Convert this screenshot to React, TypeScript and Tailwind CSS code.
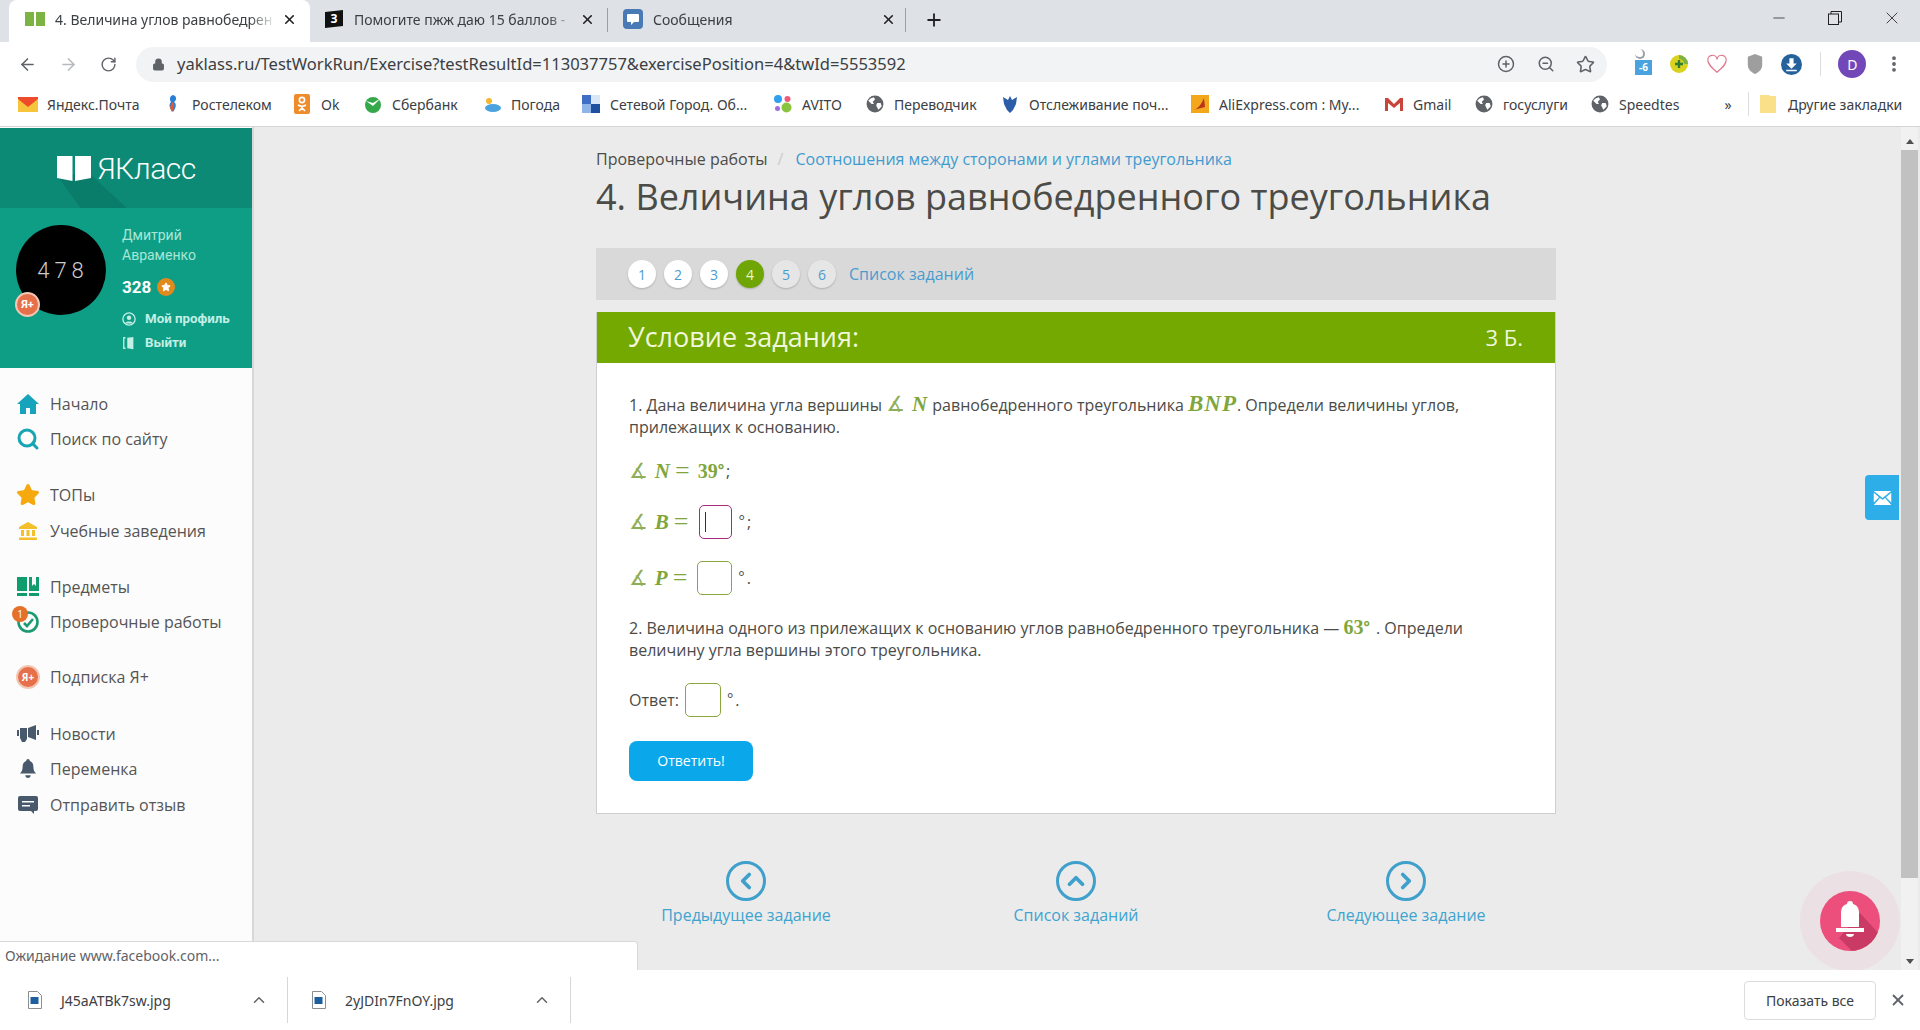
/**
 * YaKlass exercise page inside a Chrome window.
 */

import {
  ArrowLeft,
  ArrowRight,
  ChevronLeft,
  ChevronRight,
  ChevronUp,
  CirclePlus,
  EllipsisVertical,
  Lock,
  Minus,
  Plus,
  RotateCw,
  Search,
  Star,
  X,
  ZoomOut,
} from 'lucide-react';
import type { ReactNode } from 'react';

const chromeFont = "font-['Noto_Sans',sans-serif]";
const pageFont = "font-['Open_Sans',sans-serif]";
const mathClass = "font-['Liberation_Serif',serif] italic font-bold text-[#7fa63c] leading-[0] text-[21px] tracking-[1px]";
const digitClass = "font-['Liberation_Serif',serif] font-bold text-[#7fa63c] leading-[0] text-[20px]";
const equalsClass = "font-['Liberation_Serif',serif] text-[#7fa63c] leading-[0] text-[26px]";

function Globe() {
  return (
    <svg viewBox="0 0 16 16" className="w-[18px] h-[18px]">
      <circle cx="8" cy="8" r="7.5" fill="#5f6368" />
      <path d="M4 3l3-1 1 2-2 2 1 2-2 0-3-3zM10 7l3 0 1 3-3 3-1-2-1-2z" fill="#fff" />
    </svg>
  );
}

function Sq({ children }: { children: ReactNode }) {
  return (
    <svg viewBox="0 0 20 20" className="w-5 h-5">
      {children}
    </svg>
  );
}

const bookmarks: { label: string; width: string; icon: ReactNode }[] = [
  {
    label: 'Яндекс.Почта',
    width: 'w-[145px]',
    icon: (
      <Sq>
        <rect x="0" y="3" width="20" height="15" fill="#f7c53c" />
        <path d="M0 3h20v2l-10 8-10-8z" fill="#ee4b2b" />
      </Sq>
    ),
  },
  {
    label: 'Ростелеком',
    width: 'w-[129px]',
    icon: (
      <Sq>
        <path d="M10 1c4 1 4 5 1 7 3 2 2 6-1 10-3-3-5-7-2-10-2-3-1-6 2-7z" fill="#2a7fd5" />
        <path d="M10 8c2 2 1 6-1 10-2-3-3-6 1-10z" fill="#e8562a" />
      </Sq>
    ),
  },
  {
    label: 'Ok',
    width: 'w-[71px]',
    icon: (
      <Sq>
        <rect x="2" y="0" width="16" height="20" rx="2" fill="#ee8c2c" />
        <circle cx="10" cy="6" r="2.6" fill="none" stroke="#fff" strokeWidth="1.6" />
        <path d="M6 11c2.500 1.500 5.500 1.500 8 0M10 12v2M7 17l3-3 3 3" fill="none" stroke="#fff" strokeWidth="1.6" />
      </Sq>
    ),
  },
  {
    label: 'Сбербанк',
    width: 'w-[119px]',
    icon: (
      <Sq>
        <circle cx="10" cy="11" r="8" fill="#35a84a" />
        <path d="M3 7l7 5 8-8-8 5z" fill="#fff" />
      </Sq>
    ),
  },
  {
    label: 'Погода',
    width: 'w-[99px]',
    icon: (
      <Sq>
        <circle cx="7" cy="7" r="3" fill="#f5b82e" />
        <ellipse cx="11" cy="14" rx="8" ry="4" fill="#4aa3df" />
      </Sq>
    ),
  },
  {
    label: 'Сетевой Город. Об...',
    width: 'w-[192px]',
    icon: (
      <Sq>
        <rect x="1" y="1" width="9" height="9" fill="#3f6fc4" />
        <rect x="10" y="1" width="9" height="9" fill="#d9e6f7" />
        <rect x="1" y="10" width="9" height="9" fill="#8fb4e8" />
        <rect x="10" y="10" width="9" height="9" fill="#1f4f9f" />
      </Sq>
    ),
  },
  {
    label: 'AVITO',
    width: 'w-[92px]',
    icon: (
      <Sq>
        <circle cx="5" cy="5" r="4" fill="#2f9ff0" />
        <circle cx="14.500" cy="5" r="3" fill="#ef5a7a" />
        <circle cx="4.500" cy="14.500" r="2.500" fill="#9b6fe0" />
        <circle cx="13.500" cy="13.500" r="5" fill="#8ac43f" />
      </Sq>
    ),
  },
  { label: 'Переводчик', width: 'w-[135px]', icon: <Globe /> },
  {
    label: 'Отслеживание поч...',
    width: 'w-[190px]',
    icon: (
      <Sq>
        <path d="M10 2l2 4 5-3-1 7-3 6-3 3-3-3-3-6-1-7 5 3z" fill="#2b5da8" />
      </Sq>
    ),
  },
  {
    label: 'AliExpress.com : My...',
    width: 'w-[194px]',
    icon: (
      <Sq>
        <rect x="1" y="1" width="18" height="18" fill="#f3a81c" />
        <path d="M3 16c5-1 8-5 11-12l1 9z" fill="#b8321c" />
      </Sq>
    ),
  },
  {
    label: 'Gmail',
    width: 'w-[90px]',
    icon: (
      <Sq>
        <path d="M1 4h3l6 6 6-6h3v13h-3V9l-6 5-6-5v8H1z" fill="#c9443a" />
      </Sq>
    ),
  },
  { label: 'госуслуги', width: 'w-[116px]', icon: <Globe /> },
  { label: 'Speedtes', width: 'w-[128px]', icon: <Globe /> },
];

function IconBox({ children }: { children: ReactNode }) {
  return <span className="w-[44px] flex justify-center shrink-0">{children}</span>;
}

function Tab({
  icon,
  title,
  box,
  active,
  divider,
}: {
  icon: ReactNode;
  title: string;
  box: string;
  active?: boolean;
  divider?: boolean;
}) {
  return (
    <div className={`relative flex items-center h-[42px] pb-[4px] ${box} ${active ? 'bg-white rounded-t-lg' : ''}`}>
      <span className="w-[20px] h-[20px] flex items-center justify-center shrink-0">{icon}</span>
      <span className="ml-[10px] flex-1 overflow-hidden whitespace-nowrap text-[14px] text-[#3c4043] [mask-image:linear-gradient(to_right,black_88%,transparent)]">
        {title}
      </span>
      <X size={15} strokeWidth={2.6} className="ml-[6px] shrink-0 text-[#202124]" />
      {divider && <span className="absolute right-0 top-[8px] h-[24px] w-px bg-[#9aa0a6]" />}
    </div>
  );
}

function ChromeBar() {
  return (
    <header className={`shrink-0 ${chromeFont}`}>
      {/* Tab strip */}
      <div className="h-[42px] bg-[#dee1e6] flex items-start pl-[9px] relative">
        <Tab
          active
          box="w-[301px] pl-[16px] pr-[13px]"
          title="4. Величина углов равнобедрен"
          icon={
            <svg viewBox="0 0 20 14" className="w-[20px] h-[14px]">
              <rect x="0" y="0" width="9" height="14" fill="#7cb342" />
              <rect x="11" y="0" width="9" height="14" fill="#7cb342" />
            </svg>
          }
        />
        <Tab
          divider
          box="w-[298px] pl-[14px] pr-[13px]"
          title="Помогите пжж даю 15 баллов -"
          icon={
            <svg viewBox="0 0 20 20" className="w-[20px] h-[20px]">
              <path d="M1 3l18-2v16l-18 2z" fill="#111" />
              <text x="10" y="14" textAnchor="middle" fontSize="12" fontWeight="700" fill="#fff">
                З
              </text>
            </svg>
          }
        />
        <Tab
          divider
          box="w-[298px] pl-[15px] pr-[10px]"
          title="Сообщения"
          icon={
            <svg viewBox="0 0 20 20" className="w-[20px] h-[20px]">
              <rect x="0" y="0" width="20" height="20" rx="4" fill="#4a7ab5" />
              <path d="M5 5h10a1 1 0 0 1 1 1v6a1 1 0 0 1-1 1h-4l-3 3v-3H5a1 1 0 0 1-1-1V6a1 1 0 0 1 1-1z" fill="#fff" />
            </svg>
          }
        />
        <Plus size={20} strokeWidth={2.2} className="ml-[18px] mt-[10px] text-[#202124]" />
        <div className="absolute right-[18px] top-[8px] flex items-center gap-[40px] text-[#202124]">
          <Minus size={18} strokeWidth={1} />
          <svg viewBox="0 0 14 14" className="w-[14px] h-[14px]" fill="none" stroke="#202124">
            <rect x="0.500" y="3" width="10" height="10.500" />
            <path d="M3 3V0.500h10.500V11H11" />
          </svg>
          <X size={20} strokeWidth={1} />
        </div>
      </div>

      {/* Address row */}
      <div className="h-[42px] pt-[2px] bg-white flex items-center text-[#5f6368]">
        <div className="w-[136px] flex items-center pl-[18px] gap-[22px] shrink-0">
          <ArrowLeft size={19} />
          <ArrowRight size={19} className="text-[#b6b9bd]" />
          <RotateCw size={17} />
        </div>
        <div className="w-[1471px] h-[35px] rounded-full bg-[#f1f3f4] flex items-center pl-[16px] pr-[12px]">
          <Lock size={13} fill="#5f6368" className="shrink-0" />
          <span className="ml-[12px] flex-1 text-[16.550px] whitespace-nowrap text-[#3c4043]">
            yaklass.ru/TestWorkRun/Exercise?testResultId=113037757&amp;exercisePosition=4&amp;twId=5553592
          </span>
          <CirclePlus size={18} className="mr-[22px]" />
          <ZoomOut size={18} className="mr-[21px]" />
          <Star size={19} />
        </div>
        <div className="flex-1 flex items-center pl-[24px] pr-[16px] justify-between">
          <span className="relative w-[20px] h-[30px]">
            <span className="absolute left-[4px] top-0 w-[10px] h-[10px] rounded-full border-r-2 border-b-2 border-[#9aa0a6]" />
            <span className="absolute left-[4px] top-[11px] w-[17px] h-[15px] bg-[#4aa3df] text-white text-[10px] font-bold leading-[15px] text-center">-6</span>
          </span>
          <svg viewBox="0 0 20 20" className="w-[20px] h-[20px]">
            <circle cx="10" cy="10" r="9" fill="#d9d21f" />
            <path d="M10 1a9 9 0 0 1 9 9h-4a5 5 0 0 0-5-5z" fill="#7cb342" />
            <path d="M10 6v8M6 10h8" stroke="#2e7d32" strokeWidth="2.4" />
          </svg>
          <svg viewBox="0 0 24 24" className="w-[22px] h-[22px]" fill="none" stroke="#e0788c" strokeWidth="1.300">
            <path d="M12 21C5 15 2 12 2 8a5 5 0 0 1 10-1 5 5 0 0 1 10 1c0 4-3 7-10 13z" />
          </svg>
          <svg viewBox="0 0 20 24" className="w-[18px] h-[22px]">
            <path d="M10 1l8 3v9c0 4-3 8-8 10-5-2-8-6-8-10V4z" fill="#9e9e9e" />
          </svg>
          <svg viewBox="0 0 20 20" className="w-[21px] h-[21px]">
            <circle cx="10" cy="10" r="10" fill="#25619b" />
            <path d="M8 4h4v5h3l-5 5-5-5h3zM5 15h10v1.500H5z" fill="#fff" />
          </svg>
          <span className="w-px h-[24px] bg-[#dadce0]" />
          <span className="w-[28px] h-[28px] rounded-full bg-[#7248b9] text-white text-[14px] flex items-center justify-center">D</span>
          <EllipsisVertical size={20} strokeWidth={2.6} />
        </div>
      </div>

      {/* Bookmarks row */}
      <div className="h-[43px] pb-[2px] bg-white border-b border-[#d4d5d7] flex items-center pl-[18px] text-[14px] text-[#3c4043] whitespace-nowrap">
        {bookmarks.map((b) => (
          <span key={b.label} className={`flex items-center shrink-0 ${b.width}`}>
            <span className="w-[20px] flex justify-center shrink-0">{b.icon}</span>
            <span className="ml-[9px]">{b.label}</span>
          </span>
        ))}
        <span className="w-[20px] text-center shrink-0">»</span>
        <span className="ml-[10px] w-px h-[24px] bg-[#dadce0] shrink-0" />
        <svg viewBox="0 0 18 20" className="ml-[10px] w-[18px] h-[20px] shrink-0">
          <path d="M1 1h9l1 1h6v17H1z" fill="#fbe08a" />
        </svg>
        <span className="ml-[11px]">Другие закладки</span>
      </div>
    </header>
  );
}

function Nav({ icon, label, badge }: { icon: ReactNode; label: string; badge?: boolean }) {
  return (
    <div className="relative flex items-center h-[35.500px] pl-[16px]">
      {badge && (
        <span className="absolute left-[12px] top-[1px] w-[16px] h-[16px] rounded-full bg-[#e5702a] text-white text-[10px] leading-[16px] text-center z-10">1</span>
      )}
      <span className="w-[24px] flex justify-center shrink-0">{icon}</span>
      <span className="ml-[10px] text-[16px] text-[#555]">{label}</span>
    </div>
  );
}

function Sidebar() {
  return (
    <aside className={`w-[254px] shrink-0 h-full bg-[#fcfcfc] border-r-2 border-[#d8d8d8] pt-[1px] ${pageFont}`}>
      <div className="relative h-[80px] bg-[#0d8a75] flex items-center justify-center overflow-hidden">
        <svg viewBox="0 0 140 80" className="absolute left-[56px] top-[36px] w-[140px] h-[80px]">
          <path d="M0 10h34L110 80H50z" fill="#0a7d6a" />
        </svg>
        <svg viewBox="0 0 34 26" className="relative w-[34px] h-[26px] mr-[6px] ml-[1px]">
          <path d="M0 1h15.500v25L0 23zM18 1h16v22l-16 3z" fill="#fff" />
        </svg>
        <span className="relative font-['Roboto',sans-serif] font-light text-[30px] text-white tracking-[-0.5px]">ЯКласс</span>
      </div>
      <div className="h-[160px] bg-[#0e9e85] flex font-['Roboto',sans-serif]">
        <div className="relative ml-[16px] mt-[17px] w-[90px] h-[90px] rounded-full bg-black flex items-center justify-center shrink-0">
          <span className="text-[22px] font-light text-[#ccc] tracking-[5px] pl-[4px]">478</span>
          <span className="absolute -left-[1px] top-[67px] w-[25px] h-[25px] rounded-full bg-[#e5704a] border-2 border-[#f3c7b5] text-white font-bold text-[11px] leading-[21px] text-center">Я+</span>
        </div>
        <div className="ml-[16px] pt-[17px]">
          <div className="text-[14px] leading-[20px] text-[#a8e6d8]">
            Дмитрий
            <br />
            Авраменко
          </div>
          <div className="mt-[10px] flex items-center text-[17px] font-bold text-white leading-[24px]">
            328
            <span className="ml-[6px] w-[18px] h-[18px] rounded-full bg-[#e08a1e] flex items-center justify-center">
              <Star size={10} fill="#fff" stroke="#fff" />
            </span>
          </div>
          <div className="mt-[10px] flex items-center text-[13.300px] font-bold text-[#c3efe5] leading-[20px]">
            <svg viewBox="0 0 16 16" className="w-[14px] h-[14px] mr-[9px]">
              <circle cx="8" cy="8" r="7" fill="none" stroke="#c3efe5" strokeWidth="1.500" />
              <circle cx="8" cy="6.500" r="2.500" fill="#c3efe5" />
              <path d="M3.500 13c1-3 8-3 9 0z" fill="#c3efe5" />
            </svg>
            Мой профиль
          </div>
          <div className="mt-[4px] flex items-center text-[13.300px] font-bold text-[#c3efe5] leading-[20px]">
            <svg viewBox="0 0 16 16" className="w-[14px] h-[14px] mr-[9px]">
              <path d="M4 2H2v12h2" fill="none" stroke="#c3efe5" strokeWidth="1.500" />
              <path d="M6 2l7-1v14l-7-1z" fill="#c3efe5" />
            </svg>
            Выйти
          </div>
        </div>
      </div>

      <nav className="pt-[18px]">
        <Nav
          label="Начало"
          icon={
            <svg viewBox="0 0 24 22" className="w-[24px] h-[22px]">
              <path d="M12 1L1 11h3v10h6v-6h4v6h6V11h3z" fill="#16a3bb" />
            </svg>
          }
        />
        <Nav label="Поиск по сайту" icon={<Search size={24} strokeWidth={3} className="text-[#17a5b3]" />} />
        <div className="h-[20.600px]" />
        <Nav label="ТОПы" icon={<Star size={24} fill="#f5a90f" stroke="#f5a90f" />} />
        <Nav
          label="Учебные заведения"
          icon={
            <svg viewBox="0 0 20 20" className="w-[20px] h-[20px]">
              <path d="M10 1L1 6v2h18V6zM3 9h3v6H3zM8.500 9h3v6h-3zM14 9h3v6h-3zM1 16.500h18V19H1z" fill="#f3bf2a" />
            </svg>
          }
        />
        <div className="h-[20.600px]" />
        <Nav
          label="Предметы"
          icon={
            <svg viewBox="0 0 22 20" className="w-[22px] h-[20px]">
              <path d="M0 0h10v14H0zM12 0h3v9l2-2 2 2V0h3v14H12zM0 16h10v3H0zM12 16h10v3H12z" fill="#0f9d6e" />
            </svg>
          }
        />
        <Nav
          badge
          label="Проверочные работы"
          icon={
            <svg viewBox="0 0 22 22" className="w-[22px] h-[22px]" fill="none" stroke="#1d9a72" strokeWidth="2.600">
              <circle cx="11" cy="11" r="9.500" />
              <path d="M7 12l3 3 6-7" />
            </svg>
          }
        />
        <div className="h-[19.500px]" />
        <Nav
          label="Подписка Я+"
          icon={
            <span className="w-[24px] h-[24px] rounded-full bg-[#e5704a] border-2 border-[#f3c7b5] text-white font-bold text-[10px] leading-[20px] text-center">Я+</span>
          }
        />
        <div className="h-[20.600px]" />
        <Nav
          label="Новости"
          icon={
            <svg viewBox="0 0 22 20" className="w-[22px] h-[20px]">
              <path d="M0 6h2v6H0zM3 4h7v11l-2 3H5l-2-4zM11 4l8-3v15l-8-3zM20 6h2v5h-2z" fill="#47596a" />
            </svg>
          }
        />
        <Nav
          label="Переменка"
          icon={
            <svg viewBox="0 0 20 22" className="w-[18px] h-[20px]">
              <path d="M10 0c1 0 2 1 2 2 3 1 4 4 4 7 0 3 1 5 3 7H1c2-2 3-4 3-7 0-3 1-6 4-7 0-1 1-2 2-2zM7 18h6c0 2-1.500 3-3 3s-3-1-3-3z" fill="#47596a" />
            </svg>
          }
        />
        <Nav
          label="Отправить отзыв"
          icon={
            <svg viewBox="0 0 20 20" className="w-[20px] h-[20px]">
              <path d="M2 1h16a2 2 0 0 1 2 2v11a2 2 0 0 1-2 2h-2v3l-3-3H2a2 2 0 0 1-2-2V3a2 2 0 0 1 2-2z" fill="#47596a" />
              <path d="M4 6h12v1.500H4zM4 10h8v1.500H4z" fill="#fff" />
            </svg>
          }
        />
      </nav>
    </aside>
  );
}

function Angle({ letter }: { letter: string }) {
  return (
    <span className={mathClass}>
      <span className="font-['DejaVu_Sans',sans-serif] not-italic font-normal text-[#8fae5a] text-[21px] mr-[6px]">∡</span>
      {letter}
    </span>
  );
}

function Degree({ green }: { green?: boolean }) {
  return <span className={`relative -top-[2px] text-[15px] leading-[0] mr-[2px] ${green ? 'text-[#7fa63c] font-bold' : ''}`}>°</span>;
}

function AnswerBox({ width, focused }: { width: string; focused?: boolean }) {
  return (
    <span
      className={`inline-flex items-center h-[34px] rounded-[5px] bg-white border pl-[5px] ${width} ${focused ? 'border-[#a82a7c]' : 'border-[#8aa63e]'}`}
    >
      {focused && <span className="w-px h-[20px] bg-[#333]" />}
    </span>
  );
}

function StepDot({ n, current, done }: { n: number; current?: boolean; done?: boolean }) {
  return (
    <span
      className={`w-[28px] h-[28px] rounded-full flex items-center justify-center text-[14px] shadow-[0_1px_2px_rgba(0,0,0,0.2)] ${
        current ? 'bg-[#6fa505] text-[#e8f5c8]' : done ? 'bg-white text-[#4a9ccf]' : 'bg-[#e6e6e6] text-[#4a9ccf]'
      }`}
    >
      {n}
    </span>
  );
}

function PageNav({ label, icon }: { label: string; icon: ReactNode }) {
  return (
    <div className="w-[330px] shrink-0 flex flex-col items-center">
      <span className="w-[40px] h-[40px] rounded-full border-[3px] border-[#3fa0cc] flex items-center justify-center text-[#3fa0cc]">
        {icon}
      </span>
      <span className="mt-[1px] text-[16px] leading-[26px] text-[#3fa3d0] whitespace-nowrap">{label}</span>
    </div>
  );
}

function Content() {
  return (
    <main className={`w-[960px] ml-[342px] shrink-0 text-[#4b4b47] ${pageFont}`}>
      <div className="pt-[21px] text-[16px] leading-[22px] whitespace-nowrap">
        Проверочные работы
        <span className="text-[#ccc] ml-[10px] mr-[12px]">/</span>
        <span className="text-[#3f9bcf]">Соотношения между сторонами и углами треугольника</span>
      </div>
      <h1 className="mt-[2px] text-[36px] leading-[50px] whitespace-nowrap">
        4. Величина углов равнобедренного треугольника
      </h1>

      <div className="mt-[26px] h-[52px] bg-[#d9d9d9] flex items-center pl-[32px] gap-[8px]">
        <StepDot n={1} done />
        <StepDot n={2} done />
        <StepDot n={3} done />
        <StepDot n={4} current />
        <StepDot n={5} />
        <StepDot n={6} />
        <span className="ml-[5px] text-[16px] text-[#4a9ccf]">Список заданий</span>
      </div>

      <section className="mt-[12px] border border-[#cfcfcf] border-t-0 bg-white h-[502px]">
        <div className="h-[51px] bg-[#73a900] flex items-center justify-between pl-[31px] pr-[32px] text-[#f0f7dc]">
          <span className="text-[27px]">Условие задания:</span>
          <span className="text-[22px]">3 Б.</span>
        </div>
        <div className="px-[32px] pt-[31px] text-[16px] leading-[22px]">
          <p>
            1. Дана величина угла вершины <Angle letter="N" />{' '}
            равнобедренного треугольника{' '}
            <span className={`${mathClass} text-[23px]`}>BNP</span>. Определи величины углов, прилежащих к основанию.
          </p>
          <p className="mt-[22px] flex items-center h-[22px]">
            <Angle letter="N" />
            <span className={`${equalsClass} ml-[4px] mr-[8px]`}>=</span>
            <span className={digitClass}>39</span>
            <Degree green />;
          </p>
          <p className="mt-[23px] flex items-center h-[34px]">
            <Angle letter="B" />
            <span className={`${equalsClass} ml-[4px] mr-[10px]`}>=</span>
            <AnswerBox width="w-[33px]" focused />
            <span className="ml-[7px]">
              <Degree />;
            </span>
          </p>
          <p className="mt-[22px] flex items-center h-[34px]">
            <Angle letter="P" />
            <span className={`${equalsClass} ml-[4px] mr-[10px]`}>=</span>
            <AnswerBox width="w-[35px]" />
            <span className="ml-[6px]">
              <Degree />.
            </span>
          </p>
          <p className="mt-[22px]">
            2. Величина одного из прилежащих к основанию углов равнобедренного треугольника —{' '}
            <span className={digitClass}>63</span>
            <Degree green /> . Определи величину угла вершины этого треугольника.
          </p>
          <p className="mt-[22px] flex items-center h-[34px]">
            Ответ:
            <span className="ml-[6px] inline-flex">
              <AnswerBox width="w-[36px]" />
            </span>
            <span className="ml-[6px]">
              <Degree />.
            </span>
          </p>
          <button className="mt-[24px] block w-[124px] h-[40px] rounded-[8px] bg-[#0aa8ea] text-white text-[14px]">
            Ответить!
          </button>
        </div>
      </section>

      <div className="mt-[47px] flex justify-center">
        <PageNav label="Предыдущее задание" icon={<ChevronLeft size={26} strokeWidth={3.500} />} />
        <PageNav label="Список заданий" icon={<ChevronUp size={26} strokeWidth={3.500} />} />
        <PageNav label="Следующее задание" icon={<ChevronRight size={26} strokeWidth={3.500} />} />
      </div>
    </main>
  );
}

function Scrollbar() {
  return (
    <div className="absolute right-[2px] top-0 bottom-0 w-[17px] bg-[#f1f1f1] flex flex-col">
      <div className="h-[23px] pt-[6px] flex items-center justify-center">
        <span className="w-0 h-0 border-x-[4px] border-x-transparent border-b-[5px] border-b-[#505050]" />
      </div>
      <div className="h-[728px] bg-[#c1c1c1]" />
      <div className="mt-auto h-[17px] flex items-center justify-center">
        <span className="w-0 h-0 border-x-[4px] border-x-transparent border-t-[5px] border-t-[#505050]" />
      </div>
    </div>
  );
}

function FloatingWidgets() {
  return (
    <>
      {/* Feedback tab */}
      <div className="absolute right-[21px] top-[348px] w-[34px] h-[45px] bg-[#2eaee8] rounded-l-[4px] flex items-center justify-center">
        <svg viewBox="0 0 20 16" className="w-[19px] h-[14px]">
          <path d="M0 0h20L10 8zM0 2l6 5-6 6zM20 2l-6 5 6 6zM7 8l3 2 3-2 7 8H0z" fill="#fff" />
        </svg>
      </div>
      {/* Notification bell */}
      <div className="absolute right-[20px] top-[744px] w-[100px] h-[100px] rounded-full bg-[#ec4f7c]/7 flex items-center justify-center">
        <span className="relative w-[60px] h-[60px] rounded-full bg-[#ec4f7c] overflow-hidden flex items-center justify-center">
          <svg viewBox="0 0 60 60" className="absolute inset-0 w-[60px] h-[60px]">
            <path d="M40 22l20 22v16H32L19 47z" fill="#c93a64" />
            <path d="M30 10c2 0 3 1 3 3 4 1 6 4 6 9v14H21V22c0-5 2-8 6-9 0-2 1-3 3-3zM16 37h28v4H16zM26 43h8c0 2-2 3-4 3s-4-1-4-3z" fill="#fff" />
          </svg>
        </span>
      </div>
    </>
  );
}

function DownloadItem({ name, box }: { name: string; box: string }) {
  return (
    <div className={`h-[46px] flex items-center border-r border-[#d5d6d8] ${box}`}>
      <svg viewBox="0 0 14 18" className="w-[14px] h-[18px] shrink-0">
        <path d="M0.500 0.500h9l4 4v13h-13z" fill="#fff" stroke="#8a8f94" />
        <rect x="2.500" y="6" width="8" height="7" fill="#1d5f9e" />
      </svg>
      <span className="ml-[19px] text-[14px] text-[#3c4043] flex-1">{name}</span>
      <ChevronUp size={18} className="mr-[19px] text-[#5f6368]" />
    </div>
  );
}

export default function App() {
  return (
    <div className="w-[1920px] h-[1030px] flex flex-col overflow-hidden bg-white">
      <ChromeBar />
      <div className="relative flex-1 min-h-0 flex bg-[#ebebeb] overflow-hidden">
        <Sidebar />
        <Content />
        <Scrollbar />
        <FloatingWidgets />
        {/* Status bubble */}
        <div className={`absolute left-0 bottom-0 w-[638px] h-[29px] pb-[2px] bg-white rounded-tr-[4px] border-t border-r border-[#d8d8d8] pl-[5px] flex items-center text-[14px] text-[#5f6368] ${chromeFont}`}>
          Ожидание www.facebook.com...
        </div>
      </div>
      <footer className={`shrink-0 h-[60px] bg-white flex items-center ${chromeFont}`}>
        <DownloadItem name="J45aATBk7sw.jpg" box="w-[288px] pl-[28px]" />
        <DownloadItem name="2yJDIn7FnOY.jpg" box="w-[283px] pl-[24px]" />
        <button className="ml-auto w-[132px] h-[39px] rounded-[4px] border border-[#dadce0] text-[14px] text-[#3c4043]">
          Показать все
        </button>
        <IconBox>
          <X size={18} strokeWidth={2.4} className="text-[#5f6368]" />
        </IconBox>
      </footer>
    </div>
  );
}
